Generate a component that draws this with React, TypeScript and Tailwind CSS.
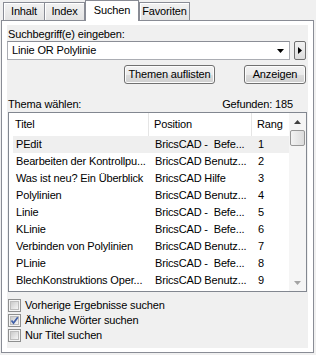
import React from "react";

const rows: [string, string, string][] = [
  ["PEdit", "BricsCAD -  Befe...", "1"],
  ["Bearbeiten der Kontrollpu...", "BricsCAD Benutz...", "2"],
  ["Was ist neu? Ein Überblick", "BricsCAD Hilfe", "3"],
  ["Polylinien", "BricsCAD Benutz...", "4"],
  ["Linie", "BricsCAD -  Befe...", "5"],
  ["KLinie", "BricsCAD -  Befe...", "6"],
  ["Verbinden von Polylinien", "BricsCAD Benutz...", "7"],
  ["PLinie", "BricsCAD -  Befe...", "8"],
  ["BlechKonstruktions Oper...", "BricsCAD Benutz...", "9"],
];

const Tab = ({ label, width, active }: { label: string; width: string; active?: boolean }) =>
  active ? (
    <div
      className={`relative z-10 -mb-px flex h-[21px] ${width} items-start justify-center border border-b-0 border-[#898c95] bg-white pt-[3px]`}
    >
      {label}
    </div>
  ) : (
    <div
      className={`flex h-[18px] ${width} items-center justify-center border border-b-0 border-[#898c95] bg-gradient-to-b from-[#f2f2f2] to-[#e3e3e3] shadow-[inset_1px_1px_0_#fff]`}
    >
      {label}
    </div>
  );

const Button = ({ label, width }: { label: string; width: string }) => (
  <div
    className={`flex h-[19px] ${width} items-center justify-center rounded-[3px] border border-[#707070] bg-[linear-gradient(#f2f2f2,#ebebeb_50%,#dddddd_50%,#cfcfcf)] shadow-[inset_0_0_0_1px_#fcfcfc]`}
  >
    {label}
  </div>
);

const CheckRow = ({ label, checked }: { label: string; checked?: boolean }) => (
  <div className="flex h-[15px] items-center pl-px">
    <div className="flex size-[13px] items-center justify-center border border-[#8e8f8f] bg-[#f4f4f4]">
      <div className="relative size-[9px] border border-[#bdbdbd] bg-gradient-to-br from-[#cbcbcb] to-[#f6f6f6]">
        {checked && (
          <svg viewBox="0 0 9 9" className="absolute -left-px -top-px size-[9px]">
            <path d="M1.5 4.5 L3.5 7 L7.8 1.2" fill="none" stroke="#4060a8" strokeWidth="1.7" />
          </svg>
        )}
      </div>
    </div>
    <span className="ml-[4px]">{label}</span>
  </div>
);

export default function App() {
  return (
    <div className="h-[355px] w-[316px] overflow-hidden bg-[#f0f0f0] font-['Liberation_Sans',Arial,sans-serif] text-[11px] leading-[13px] tracking-[-0.15px] text-black">
      <div className="flex h-[20px] items-end pl-[3px]">
        <Tab label="Inhalt" width="w-[42px]" />
        <div className="-ml-px">
          <Tab label="Index" width="w-[41px]" />
        </div>
        <Tab label="Suchen" width="w-[54px]" active />
        <Tab label="Favoriten" width="w-[51px]" />
      </div>

      <div className="ml-px h-[333px] w-[313px] border border-[#898c95] bg-white px-[5px] py-[4px]">
        <div className="h-full w-full bg-[#f0f0f0] pt-[3px]">
          <div className="h-[13px] pl-px">Suchbegriff(e) eingeben:</div>

          <div className="flex items-start">
            <div className="flex h-[19px] w-[283px] items-center justify-between border border-[#abadb3] border-t-[#8b8e96] bg-white pl-[4px] pr-[5px]">
              <span>Linie OR Polylinie</span>
              <svg width="7" height="4" viewBox="0 0 7 4">
                <path d="M0 0 H7 L3.5 4 Z" fill="#000" />
              </svg>
            </div>
            <div className="ml-[4px] flex h-[19px] w-[12px] items-center justify-center rounded-[2px] border border-[#707070] bg-[linear-gradient(#f2f2f2,#dddddd)]">
              <svg width="4" height="7" viewBox="0 0 4 7">
                <path d="M0 0 V7 L4 3.5 Z" fill="#000" />
              </svg>
            </div>
          </div>

          <div className="mt-[5px] flex pl-[117px]">
            <Button label="Themen auflisten" width="w-[91px]" />
            <div className="ml-[29px]">
              <Button label="Anzeigen" width="w-[62px]" />
            </div>
          </div>

          <div className="mt-[14px] flex h-[13px] justify-between pl-px pr-[15px]">
            <span>Thema wählen:</span>
            <span>Gefunden: 185</span>
          </div>

          <div className="ml-px mt-px flex h-[180px] w-[299px] border border-[#828790] bg-white">
            <div className="flex-1">
              <div className="flex h-[23px] items-center">
                <div className="flex h-full w-[140px] items-center border-r border-[#e5e5e5] pl-[6px]">Titel</div>
                <div className="flex h-full w-[103px] items-center border-r border-[#e5e5e5] pl-[5px]">Position</div>
                <div className="flex h-full flex-1 items-center pl-[5px]">Rang</div>
              </div>
              {rows.map(([title, pos, rank], i) => (
                <div key={i} className={`flex h-[17px] items-center ${i === 0 ? "ml-[4px] bg-[#efefef] pl-[3px]" : "pl-[7px]"}`}>
                  <span className="w-[139px] whitespace-pre">{title}</span>
                  <span className="w-[103px] whitespace-pre">{pos}</span>
                  <span>{rank}</span>
                </div>
              ))}
            </div>

            <div className="flex w-[17px] flex-col bg-[#f5f5f5]">
              <div className="flex h-[17px] items-center justify-center">
                <svg width="7" height="4" viewBox="0 0 7 4">
                  <path d="M0 4 H7 L3.5 0 Z" fill="#404040" />
                </svg>
              </div>
              <div className="mx-px h-[16px] rounded-[2px] border border-[#979797] bg-gradient-to-r from-[#f3f3f3] to-[#dcdcdc]" />
              <div className="flex-1" />
              <div className="flex h-[17px] items-center justify-center">
                <svg width="7" height="4" viewBox="0 0 7 4">
                  <path d="M0 0 H7 L3.5 4 Z" fill="#a3a3a3" />
                </svg>
              </div>
            </div>
          </div>

          <div className="mt-[6px]">
            <CheckRow label="Vorherige Ergebnisse suchen" />
            <CheckRow label="Ähnliche Wörter suchen" checked />
            <CheckRow label="Nur Titel suchen" />
          </div>
        </div>
      </div>
    </div>
  );
}
